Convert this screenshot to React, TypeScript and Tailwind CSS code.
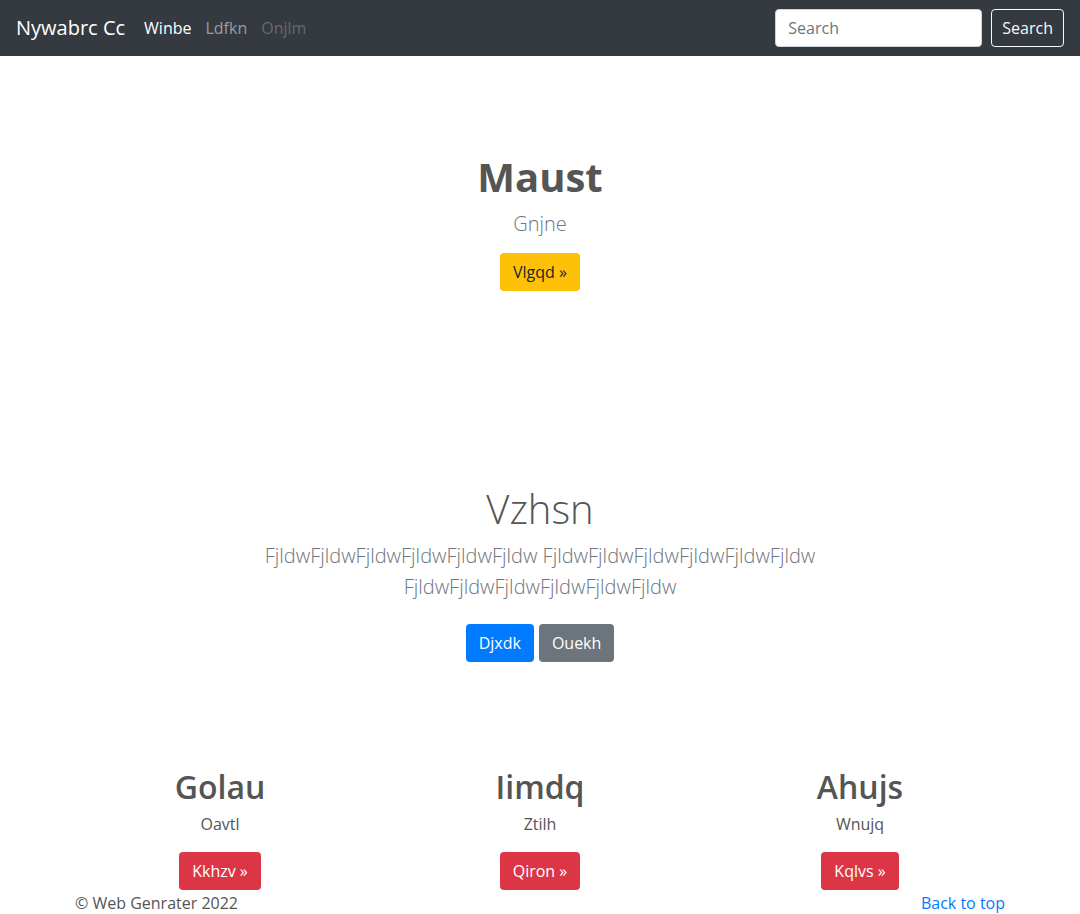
export default function App() {
  const cards = [
    { title: "Golau", text: "Oavtl", button: "Kkhzv »" },
    { title: "Iimdq", text: "Ztilh", button: "Qiron »" },
    { title: "Ahujs", text: "Wnujq", button: "Kqlvs »" },
  ];

  return (
    <div className="min-h-[914px] bg-white font-['Segoe_UI','Open_Sans',sans-serif] text-[16px] text-[#555]">
      <nav className="flex h-14 items-center justify-between bg-[#343a40] px-4">
        <div className="flex items-center">
          <a className="mr-[12px] text-[20px] text-white">Nywabrc Cc</a>
          <a className="px-[7px] text-white">Winbe</a>
          <a className="px-[7px] text-white/50">Ldfkn</a>
          <a className="px-[7px] text-white/25">Onjlm</a>
        </div>
        <form className="flex items-center gap-[9px]">
          <input
            className="h-[38px] w-[207px] rounded border border-[#ced4da] bg-white px-3 text-[#495057] outline-none placeholder:text-[#6c757d]"
            placeholder="Search"
          />
          <button className="h-[38px] rounded border border-[#f8f9fa] px-[10px] text-[#f8f9fa]">Search</button>
        </form>
      </nav>

      <section className="pt-[97px] text-center">
        <h1 className="text-[40px] leading-[1.2] font-bold">Maust</h1>
        <p className="mt-2 text-[20px] leading-[30px] font-light text-[#6c757d]">Gnjne</p>
        <a className="mt-[14px] inline-block rounded border border-transparent bg-[#ffc107] px-3 py-[6px] leading-6 text-[#212529]">Vlgqd »</a>
      </section>

      <section className="pt-[194px] text-center">
        <h1 className="text-[40px] leading-[1.2] font-light">Vzhsn</h1>
        <p className="mx-auto mt-[7px] max-w-[610px] text-[20px] leading-[31px] font-light text-[#6c757d]">
          FjldwFjldwFjldwFjldwFjldwFjldw FjldwFjldwFjldwFjldwFjldwFjldw FjldwFjldwFjldwFjldwFjldwFjldw
        </p>
        <div className="mt-[22px] flex justify-center gap-[5px]">
          <a className="rounded border border-transparent bg-[#007bff] px-3 py-[6px] leading-6 text-white">Djxdk</a>
          <a className="rounded border border-transparent bg-[#6c757d] px-3 py-[6px] leading-6 text-white">Ouekh</a>
        </div>
      </section>

      <section className="mx-auto grid w-[960px] grid-cols-3 pt-[106px] text-center">
        {cards.map((c) => (
          <div key={c.title} className="px-[15px]">
            <h2 className="text-[32px] leading-[1.2] font-semibold">{c.title}</h2>
            <p className="mt-[6px] leading-6">{c.text}</p>
            <a className="mt-4 inline-block rounded border border-transparent bg-[#dc3545] px-3 py-[6px] leading-6 text-white">{c.button}</a>
          </div>
        ))}
      </section>

      <footer className="mx-auto flex w-[960px] justify-between px-[15px] pt-[1px] leading-6">
        <p>© Web Genrater 2022</p>
        <a className="text-[#007bff]">Back to top</a>
      </footer>
    </div>
  );
}
